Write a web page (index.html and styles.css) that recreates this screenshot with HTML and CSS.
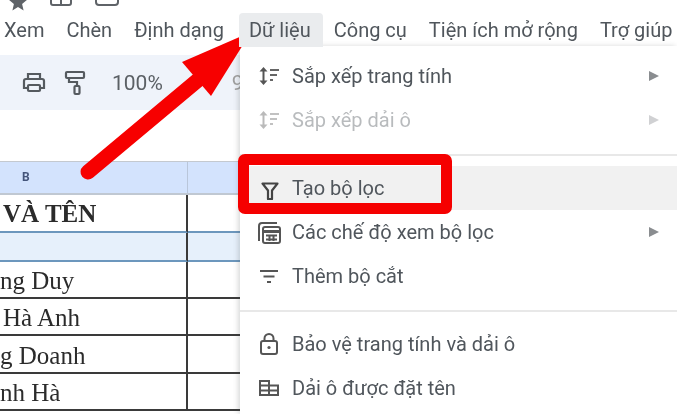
FILE: index.html
```html
<!DOCTYPE html>
<html lang="en">
<head>
  <meta charset="UTF-8" />
  <title>Dữ liệu menu</title>
  <link rel="stylesheet" href="styles.css">
</head>
<body>
  <div class="page">
    <div class="title-icons">
      <svg class="title-icon" width="20" height="13" viewBox="0 0 20 13"><path d="M10 -7l2.6 6.4 6.4.5-4.9 4.2 1.5 6.4L10 7l-5.600 3.500 1.500-6.400L1 -.1l6.400-.5z" fill="#5f6368"/></svg>
      <svg class="title-icon" width="24" height="13" viewBox="0 0 24 13"><path d="M2 -6h20v9a2 2 0 0 1-2 2H4a2 2 0 0 1-2-2zM12 -6v11" fill="none" stroke="#5f6368" stroke-width="2"/></svg>
      <svg class="title-icon" width="26" height="13" viewBox="0 0 26 13"><path d="M2 -6h22v8a3 3 0 0 1-3 3H5a3 3 0 0 1-3-3z" fill="none" stroke="#5f6368" stroke-width="2"/></svg>
    </div>

    <div class="menubar">
      <span class="menu-title">Xem</span>
      <span class="menu-title">Chèn</span>
      <span class="menu-title">Định dạng</span>
      <span class="menu-title active">Dữ liệu</span>
      <span class="menu-title">Công cụ</span>
      <span class="menu-title">Tiện ích mở rộng</span>
      <span class="menu-title">Trợ giúp</span>
    </div>

    <div class="toolbar">
      <svg width="26" height="26" viewBox="0 0 26 26" fill="none" stroke="#555a5f" stroke-width="2.200"><path d="M7 9V4h12v5M7 18H3v-7a2 2 0 0 1 2-2h16a2 2 0 0 1 2 2v7h-4"/><rect x="7" y="15" width="12" height="6" rx="1"/></svg>
      <svg class="roller" width="24" height="26" viewBox="0 0 24 26" fill="none" stroke="#555a5f" stroke-width="2.200"><rect x="2" y="2" width="18" height="6" rx="1"/><path d="M5 8v4h8v4"/><rect x="10.500" y="16" width="5" height="8" rx="1"/></svg>
      <span class="zoom">100%</span>
      <span class="clip-glyph">9</span>
    </div>

    <div class="blank"></div>

    <div class="sheet">
      <div class="col-head">B</div><div class="col-head"></div>
      <div class="cell title">VÀ TÊN</div><div class="cell"></div>
      <div class="cell selected"></div><div class="cell selected"></div>
      <div class="cell name">ng Duy</div><div class="cell"></div>
      <div class="cell name indent">Hà Anh</div><div class="cell"></div>
      <div class="cell name">g Doanh</div><div class="cell"></div>
      <div class="cell name">nh Hà</div><div class="cell"></div>
    </div>

    <div class="data-menu">
      <div class="item">
        <svg class="item-icon" width="24" height="24" viewBox="0 0 24 24"><path d="M6.500 5v14" stroke="#555" stroke-width="2"/><path d="M2.500 7.500L6.500 3l4 4.500zM2.500 16.500L6.500 21l4-4.500z" fill="#555"/><path d="M13 6h9M13 11h7M13 16h3" stroke="#666" stroke-width="2" fill="none"/></svg>
        <span class="item-label">Sắp xếp trang tính</span><span class="caret"></span>
      </div>
      <div class="item disabled">
        <svg class="item-icon" width="24" height="24" viewBox="0 0 24 24"><path d="M6.500 5v14" stroke="#555" stroke-width="2"/><path d="M2.500 7.500L6.500 3l4 4.500zM2.500 16.500L6.500 21l4-4.500z" fill="#555"/><path d="M13 6h9M13 11h7M13 16h3" stroke="#666" stroke-width="2" fill="none"/></svg>
        <span class="item-label">Sắp xếp dải ô</span><span class="caret"></span>
      </div>
      <div class="separator"></div>
      <div class="item hovered">
        <svg class="item-icon" width="24" height="24" viewBox="0 0 24 24"><path d="M5.500 7.500h15L15 14.500V23h-4v-8.500z" fill="none" stroke="#444" stroke-width="2.200" stroke-linejoin="round"/></svg>
        <span class="item-label">Tạo bộ lọc</span>
      </div>
      <div class="item">
        <svg class="item-icon" width="24" height="24" viewBox="0 0 24 24" fill="none" stroke="#555" stroke-width="2"><path d="M2 21V6a3 3 0 0 1 3-3h15"/><rect x="6" y="7" width="17" height="16" rx="2"/><path d="M6.500 11.500h16" stroke-width="3"/><path d="M9 15.500h11M9 19.500h11M12.500 15v6M16.500 15v6" stroke-width="2"/></svg>
        <span class="item-label">Các chế độ xem bộ lọc</span><span class="caret"></span>
      </div>
      <div class="item">
        <svg class="item-icon" width="24" height="24" viewBox="0 0 24 24"><path d="M3 7h18M6.500 12.500h11M10 18h4" stroke="#555" stroke-width="2" fill="none"/></svg>
        <span class="item-label">Thêm bộ cắt</span>
      </div>
      <div class="separator"></div>
      <div class="item">
        <svg class="item-icon" width="24" height="24" viewBox="0 0 24 24" fill="none" stroke="#555" stroke-width="2"><rect x="4" y="9" width="16" height="13" rx="2"/><path d="M7.500 9V6.500a4.500 4.500 0 0 1 9 0V9"/><circle cx="12" cy="15.500" r="1.600" fill="#555" stroke="none"/></svg>
        <span class="item-label">Bảo vệ trang tính và dải ô</span>
      </div>
      <div class="item">
        <svg class="item-icon" width="24" height="24" viewBox="0 0 24 24" fill="none" stroke="#555" stroke-width="2"><path d="M3 5h9v14H3zM3 9.500h18M3 14.500h18M12 9.500h9V19h-9"/></svg>
        <span class="item-label">Dải ô được đặt tên</span>
      </div>
    </div>

    <div class="highlight-box"></div>

    <svg class="arrow" width="677" height="414" viewBox="0 0 677 414">
      <path d="M88 172L198 80" stroke="#f70000" stroke-width="15" stroke-linecap="round" fill="none"/>
      <path d="M251 32L182 62L211 96z" fill="#f70000"/>
    </svg>
  </div>
</body>
</html>
```

FILE: styles.css
```css
body {
  margin: 0;
  font-family: Roboto, "Liberation Sans", sans-serif;
  background: #fff;
}
.page {
  position: relative;
  width: 677px;
  height: 414px;
  overflow: hidden;
  background: #fff;
  filter: blur(0.5px);
}
.title-icons {
  height: 13px;
  display: flex;
  align-items: flex-start;
  gap: 21px;
  padding-left: 8px;
}
.title-icon {
  display: block;
}
.menubar {
  height: 33px;
  display: flex;
  align-items: center;
  padding-left: 4px;
  gap: 22px;
  font-size: 20px;
  color: #50565c;
  white-space: nowrap;
}
.menu-title.active {
  position: relative;
  z-index: 1;
  margin: 0 1px 0 3px;
}
.menu-title.active::before {
  content: "";
  position: absolute;
  z-index: -1;
  left: -10px;
  right: -12px;
  top: -5px;
  bottom: -5px;
  background: #eaecee;
  border-radius: 4px 4px 0 0;
}
.toolbar {
  margin-top: 9px;
  height: 55px;
  background: #eff3fa;
  display: flex;
  align-items: center;
  padding-left: 21px;
  gap: 13px;
}
.roller {
  margin-left: 4px;
}
.zoom {
  margin-left: 11px;
  font-size: 21px;
  color: #5b6065;
}
.clip-glyph {
  margin-left: 56px;
  font-size: 21px;
  color: #a0a0a0;
}
.blank {
  height: 51px;
}
.sheet {
  display: grid;
  grid-template-columns: 188px 1fr;
  grid-template-rows: 33px 38px 29px 37px 37px 38px 37px;
  border-top: 1px solid #c4c9cf;
  font-family: "Liberation Serif", serif;
  color: #2b2b2b;
}
.col-head {
  background: #d3e3fd;
  border-bottom: 2px solid #c0c8d2;
  text-align: center;
  font: bold 12px/30px Roboto, sans-serif;
  color: #44557a;
}
.col-head:first-child {
  text-align: left;
  padding-left: 22px;
  border-right: 1px solid #b9c6da;
}
.cell {
  border-bottom: 2px solid #3a3a3a;
  border-right: 2px solid #3a3a3a;
  box-sizing: border-box;
  display: flex;
  align-items: center;
  white-space: nowrap;
}
.cell:nth-child(even) {
  border-right: 0;
}
.cell.title {
  font-size: 25px;
  font-weight: bold;
  padding: 1px 0 0 3px;
  border-bottom: 2px solid #6c97bd;
}
.sheet .cell:nth-child(4) {
  border-bottom: 2px solid #6c97bd;
}
.cell.selected {
  background: #e6f0fb;
  border-bottom: 2px solid #6c97bd;
}
.cell.name {
  font-size: 25px;
  padding-top: 3px;
}
.cell.indent {
  padding-left: 3px;
}
.data-menu {
  position: absolute;
  left: 240px;
  top: 46px;
  width: 437px;
  height: 368px;
  box-sizing: border-box;
  padding-top: 8px;
  background: #fff;
  box-shadow: -2px 0 5px rgba(60, 64, 67, 0.2);
  color: #50565c;
  font-size: 20px;
}
.item {
  position: relative;
  height: 44px;
  display: flex;
  align-items: center;
  padding-left: 52px;
}
.item-icon {
  position: absolute;
  left: 17px;
  top: 10px;
}
.item-label {
  white-space: nowrap;
}
.caret {
  position: absolute;
  left: 409px;
  top: 17px;
  width: 0;
  height: 0;
  border-left: 10px solid #8a8d90;
  border-top: 5px solid transparent;
  border-bottom: 5px solid transparent;
}
.disabled {
  opacity: 0.4;
}
.hovered {
  background: #f1f1f1;
}
.separator {
  height: 2px;
  margin: 12px 0 10px;
  background: #e8e8e8;
}
.highlight-box {
  position: absolute;
  left: 238px;
  top: 154px;
  width: 214px;
  height: 60px;
  box-sizing: border-box;
  border: 11px solid #f50000;
  border-radius: 7px;
}
.arrow {
  position: absolute;
  left: 0;
  top: 0;
}
```
